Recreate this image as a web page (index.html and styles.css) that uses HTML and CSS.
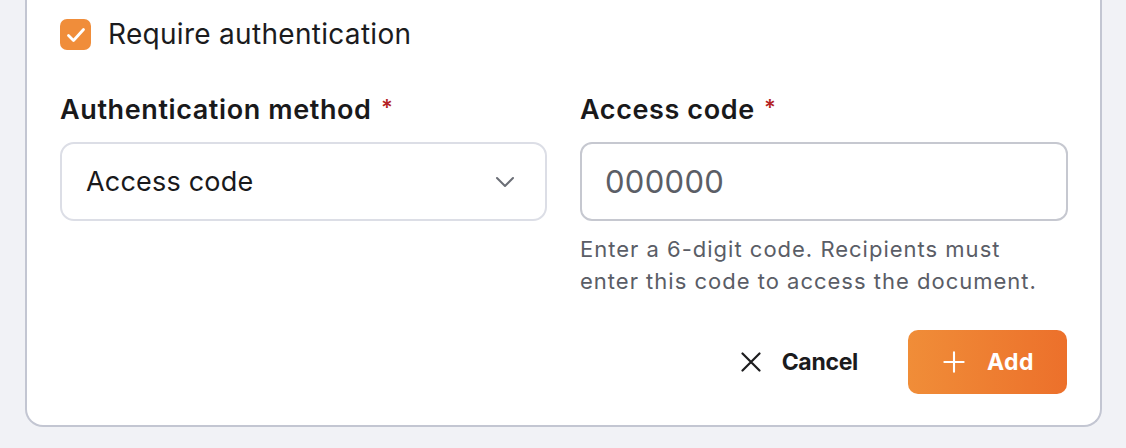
FILE: index.html
```html
<!DOCTYPE html>
<html lang="en">
<head>
<meta charset="utf-8">
<link rel="stylesheet" href="styles.css">
</head>
<body>
<div class="card">
  <label class="check-row">
    <span class="checkbox">
      <svg viewBox="0 0 24 24" width="24" height="24"><path d="M4.5 12.5l5 5L19.5 6.5" fill="none" stroke="#fff" stroke-width="2.8" stroke-linecap="round" stroke-linejoin="round"/></svg>
    </span>
    <span class="check-label">Require authentication</span>
  </label>
  <div class="fields">
    <div class="field">
      <div class="label">Authentication method <span class="req">*</span></div>
      <div class="select">
        <span>Access code</span>
        <svg class="chev" viewBox="0 0 20 12" width="20" height="12"><path d="M2 2l8 8 8-8" fill="none" stroke="#6b6e76" stroke-width="2" stroke-linecap="round" stroke-linejoin="round"/></svg>
      </div>
    </div>
    <div class="field">
      <div class="label">Access code <span class="req">*</span></div>
      <div class="input"><span class="placeholder">000000</span></div>
      <p class="help">Enter a 6-digit code. Recipients must<br>enter this code to access the document.</p>
    </div>
  </div>
  <div class="actions">
    <button class="btn-cancel">
      <svg viewBox="0 0 20 20" width="20" height="20"><path d="M1.5 1.5l17 17M18.5 1.5l-17 17" fill="none" stroke="#1c1c1e" stroke-width="2.2" stroke-linecap="round"/></svg>
      <span>Cancel</span>
    </button>
    <button class="btn-add">
      <svg viewBox="0 0 24 24" width="22" height="22"><path d="M12 1.5v21M1.5 12h21" fill="none" stroke="#fff" stroke-width="2.3" stroke-linecap="round"/></svg>
      <span>Add</span>
    </button>
  </div>
</div>
</body>
</html>
```

FILE: styles.css
```css
* { box-sizing: border-box; }
html, body { margin: 0; padding: 0; }
body {
  background: #f1f2f6;
  font-family: Inter, "Noto Sans", sans-serif;
  color: #1b1b1d;
  width: 1126px;
  height: 448px;
  overflow: hidden;
}
.card {
  margin-left: 25px;
  width: 1077px;
  height: 427px;
  background: #fff;
  border: 2px solid #c3c6d2;
  border-top: 0;
  border-radius: 0 0 18px 18px;
  padding: 19px 33px 0 33px;
}
.check-row {
  display: flex;
  align-items: center;
  gap: 17px;
}
.checkbox {
  width: 31px;
  height: 31px;
  border-radius: 7px;
  background: #f08d3a;
  display: flex;
  align-items: center;
  justify-content: center;
}
.check-label {
  font-size: 28px;
  font-weight: 400;
  color: #1b1b1d;
  letter-spacing: 0.3px;
  line-height: 31px;
}
.fields {
  display: grid;
  grid-template-columns: 487px 488px;
  column-gap: 33px;
  margin-top: 39px;
}
.label {
  font-size: 27px;
  font-weight: 600;
  line-height: 36px;
  color: #19191b;
  letter-spacing: 0.6px;
}
.req { color: #b42323; font-size: 22px; vertical-align: 4px; margin-left: 2px; }
.select, .input {
  margin-top: 14px;
  height: 79px;
  border-radius: 14px;
  display: flex;
  align-items: center;
}
.select {
  border: 2px solid #dcdee6;
  padding: 0 30px 0 24px;
  justify-content: space-between;
  color: #19191b;
  font-size: 27px;
  letter-spacing: 0.2px;
}
.input {
  border: 2px solid #c6c8d0;
  border-radius: 12px;
  padding: 0 23px;
}
.placeholder { color: #5b5e66; font-size: 31px; letter-spacing: 0.3px; }
.help {
  margin: 12px 0 0;
  font-size: 22px;
  line-height: 32px;
  color: #5a5d66;
  letter-spacing: 1px;
}
.actions {
  display: flex;
  justify-content: flex-end;
  align-items: center;
  gap: 50px;
  margin-top: 33px;
}
button {
  font-family: inherit;
  border: 0;
  cursor: pointer;
  display: flex;
  align-items: center;
}
.btn-cancel {
  background: none;
  gap: 21px;
  font-size: 23px;
  font-weight: 700;
  color: #1b1b1d;
  padding: 0;
  letter-spacing: -0.3px;
}
.btn-add {
  width: 159px;
  height: 64px;
  border-radius: 10px;
  background: linear-gradient(90deg, #f08d38, #ec702b);
  color: #fff;
  font-size: 23px;
  font-weight: 700;
  justify-content: center;
  gap: 22px;
  padding-right: 4px;
  letter-spacing: 0.5px;
}
```
